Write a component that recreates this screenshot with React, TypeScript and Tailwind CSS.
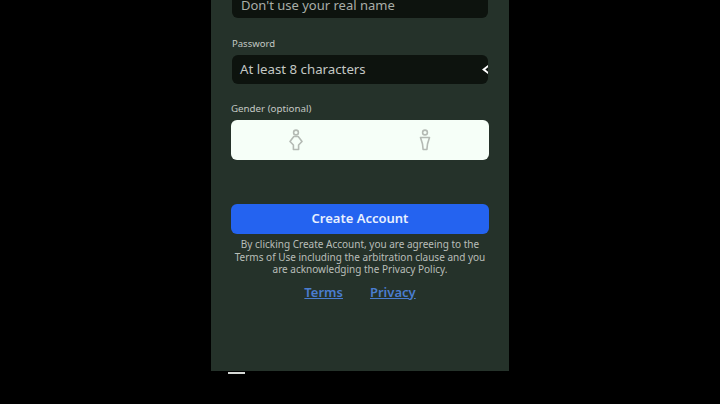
const font = { fontFamily: '"Noto Sans", sans-serif' }

function PersonIcon({ kind }: { kind: "a" | "b" }) {
  return (
    <svg width="14" height="22" viewBox="0 0 14 22" fill="none" stroke="#b4bab4" strokeWidth="1.6" aria-hidden="true">
      <circle cx="7" cy="3.5" r="2.4" />
      {kind === "a" ? (
        <path d="M4.8 7.5h4.4L13 12.5 9.6 16v4.5H4.4V16L1 12.5z" strokeLinejoin="round" />
      ) : (
        <path d="M2.5 8.5h9L9.5 15l-.6 5.5H5.1L4.5 15z" strokeLinejoin="round" />
      )}
    </svg>
  )
}

export default function App() {
  return (
    <div className="flex h-[404px] w-[720px] justify-center overflow-hidden bg-black" style={font}>
      <div className="flex h-[371px] w-[298px] flex-col bg-[#25322a]">
        <div className="flex flex-1 flex-col px-[20px]">
          <div className="mx-[1px] -mt-[12px] flex h-[30px] shrink-0 items-center rounded-md bg-[#0d130e] px-[9px] pt-[5px] text-[13px] text-[#a9aea8]">
            Don't use your real name
          </div>

          <label className="mt-[20px] ml-[1px] text-[9.5px] leading-[12px] text-[#c3c8c3]">Password</label>
          <div className="mx-[1px] mt-[5px] flex h-[29px] shrink-0 items-center justify-between rounded-md bg-[#0d130e] pl-[8px] text-[13.25px] text-[#c4c8c4]">
            <span className="pt-[1px]">At least 8 characters</span>
            <span className="h-[9px] w-[6px] bg-white [clip-path:polygon(100%_0,0_50%,100%_100%,100%_75%,55%_50%,100%_25%)]" />
          </div>

          <label className="mt-[19px] text-[9.75px] leading-[12px] text-[#c3c8c3]">Gender (optional)</label>
          <div className="mt-[5px] grid h-[40px] shrink-0 grid-cols-2 items-center justify-items-center rounded-md bg-[#f6fff8]">
            <PersonIcon kind="a" />
            <PersonIcon kind="b" />
          </div>

          <button className="mt-[44px] h-[30px] shrink-0 rounded-md bg-[#2463f0] text-[13px] font-semibold text-[#e8f0ff]">
            Create Account
          </button>

          <p className="mt-[4px] text-center text-[10px] leading-[12.5px] text-[#b9beb9]">
            By clicking Create Account, you are agreeing to the
            <br />
            Terms of Use including the arbitration clause and you
            <br />
            are acknowledging the Privacy Policy.
          </p>

          <div className="mt-[7px] flex justify-center gap-[27px] text-[13px] font-semibold text-[#4a7dd0] underline">
            <span>Terms</span>
            <span>Privacy</span>
          </div>
        </div>

        <div className="relative h-0 shrink-0">
          <span className="absolute left-[17px] top-[1px] h-[2px] w-[17px] bg-[#d5d8d5]" />
        </div>
      </div>
    </div>
  )
}
